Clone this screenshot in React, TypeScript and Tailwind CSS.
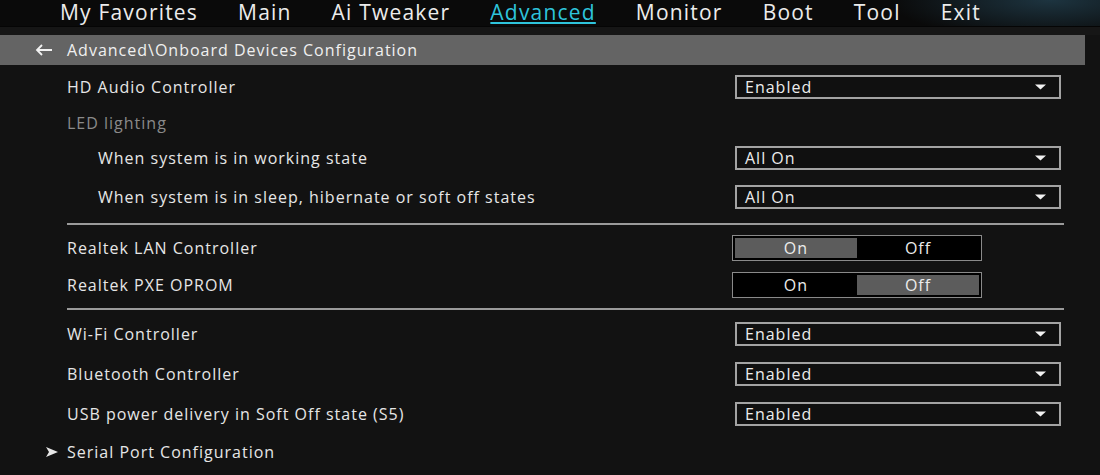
import React from "react";

const Caret = () => (
  <svg width="11" height="6" viewBox="0 0 11 6" className="mr-[13px]">
    <polygon points="0,0.5 11,0.5 5.5,5.5" fill="#f2f2f2" />
  </svg>
);

const Dropdown = ({ value }: { value: string }) => (
  <div className="ml-[3px] mr-[3px] h-[24px] flex items-center justify-between border-2 border-[#a3a3a3] bg-[#101010] pl-[8px]">
    <span className="text-[16px] text-[#ececec] tracking-[1px] leading-none">{value}</span>
    <Caret />
  </div>
);

const Toggle = ({ on }: { on: boolean }) => (
  <div className="w-[250px] h-[26px] border border-[#8a8a8a] bg-black p-[2px] flex">
    <div className={`flex-1 flex items-center justify-center text-[16px] text-[#ececec] tracking-[1px] ${on ? "bg-[#5c5c5c]" : ""}`}>On</div>
    <div className={`flex-1 flex items-center justify-center text-[16px] text-[#ececec] tracking-[1px] ${!on ? "bg-[#5c5c5c]" : ""}`}>Off</div>
  </div>
);

const Row = ({
  label,
  h,
  indent = false,
  dim = false,
  children,
}: {
  label: string;
  h: string;
  indent?: boolean;
  dim?: boolean;
  children?: React.ReactNode;
}) => (
  <div className={`flex items-center ${h}`}>
    <div
      className={`flex-1 text-[16px] tracking-[1px] ${indent ? "pl-[31px]" : ""} ${
        dim ? "text-[#8a8a8a]" : "text-[#e6e6e6]"
      }`}
    >
      {label}
    </div>
    <div className="w-[332px]">{children}</div>
  </div>
);

export default function App() {
  const tabs = ["My Favorites", "Main", "Ai Tweaker", "Advanced", "Monitor", "Boot", "Tool", "Exit"];
  return (
    <div className="w-[1100px] h-[475px] overflow-hidden bg-[#121212] font-['Open_Sans','Noto_Sans',sans-serif]">
      <div className="h-[27px] bg-[#0a0a0a] bg-[radial-gradient(ellipse_160px_40px_at_1050px_0px,#1d3440,transparent)] border-b border-[#050505] flex items-start pl-[60px] gap-[40px]">
        {tabs.map((t) => (
          <div
            key={t}
            className={`text-[21px] leading-[24px] tracking-[1.2px] ${
              t === "Advanced"
                ? "text-[#2ec4dc] underline decoration-2 underline-offset-[2px] decoration-[#2ec4dc]"
                : "text-[#ececec]"
            }`}
          >
            {t}
          </div>
        ))}
      </div>
      <div className="h-[8px] bg-[#161616]" />
      <div className="mr-[15px] h-[30px] bg-[#646464] flex items-center pl-[35px]">
        <svg width="18" height="12" viewBox="0 0 18 12" className="mr-[14px]">
          <path d="M17 6H2M7 1L2 6l5 5" stroke="#f2f2f2" strokeWidth="1.8" fill="none" />
        </svg>
        <span className="text-[16px] text-[#f0f0f0] tracking-[1px]">Advanced\Onboard Devices Configuration</span>
      </div>
      <div className="pl-[67px] pr-[36px] pt-[2px]">
        <Row label="HD Audio Controller" h="h-[40px]">
          <Dropdown value="Enabled" />
        </Row>
        <Row label="LED lighting" h="h-[32px]" dim />
        <Row label="When system is in working state" h="h-[38px]" indent>
          <Dropdown value="All On" />
        </Row>
        <Row label="When system is in sleep, hibernate or soft off states" h="h-[40px]" indent>
          <Dropdown value="All On" />
        </Row>
        <div className="mt-[6px] h-[2px] bg-[#9a9a9a]" />
        <div className="h-[4px]" />
        <Row label="Realtek LAN Controller" h="h-[37px]">
          <Toggle on={true} />
        </Row>
        <Row label="Realtek PXE OPROM" h="h-[37px]">
          <Toggle on={false} />
        </Row>
        <div className="mt-[5px] h-[2px] bg-[#9a9a9a]" />
        <div className="h-[4px]" />
        <Row label="Wi-Fi Controller" h="h-[40px]">
          <Dropdown value="Enabled" />
        </Row>
        <Row label="Bluetooth Controller" h="h-[40px]">
          <Dropdown value="Enabled" />
        </Row>
        <Row label="USB power delivery in Soft Off state (S5)" h="h-[40px]">
          <Dropdown value="Enabled" />
        </Row>
        <div className="flex items-center h-[36px] -ml-[21px]">
          <svg width="12" height="10" viewBox="0 0 12 10" className="mr-[9px]">
            <polygon points="0,0 12,5 0,10 3,5" fill="#e6e6e6" />
          </svg>
          <span className="text-[16px] text-[#e6e6e6] tracking-[1px]">Serial Port Configuration</span>
        </div>
      </div>
    </div>
  );
}
